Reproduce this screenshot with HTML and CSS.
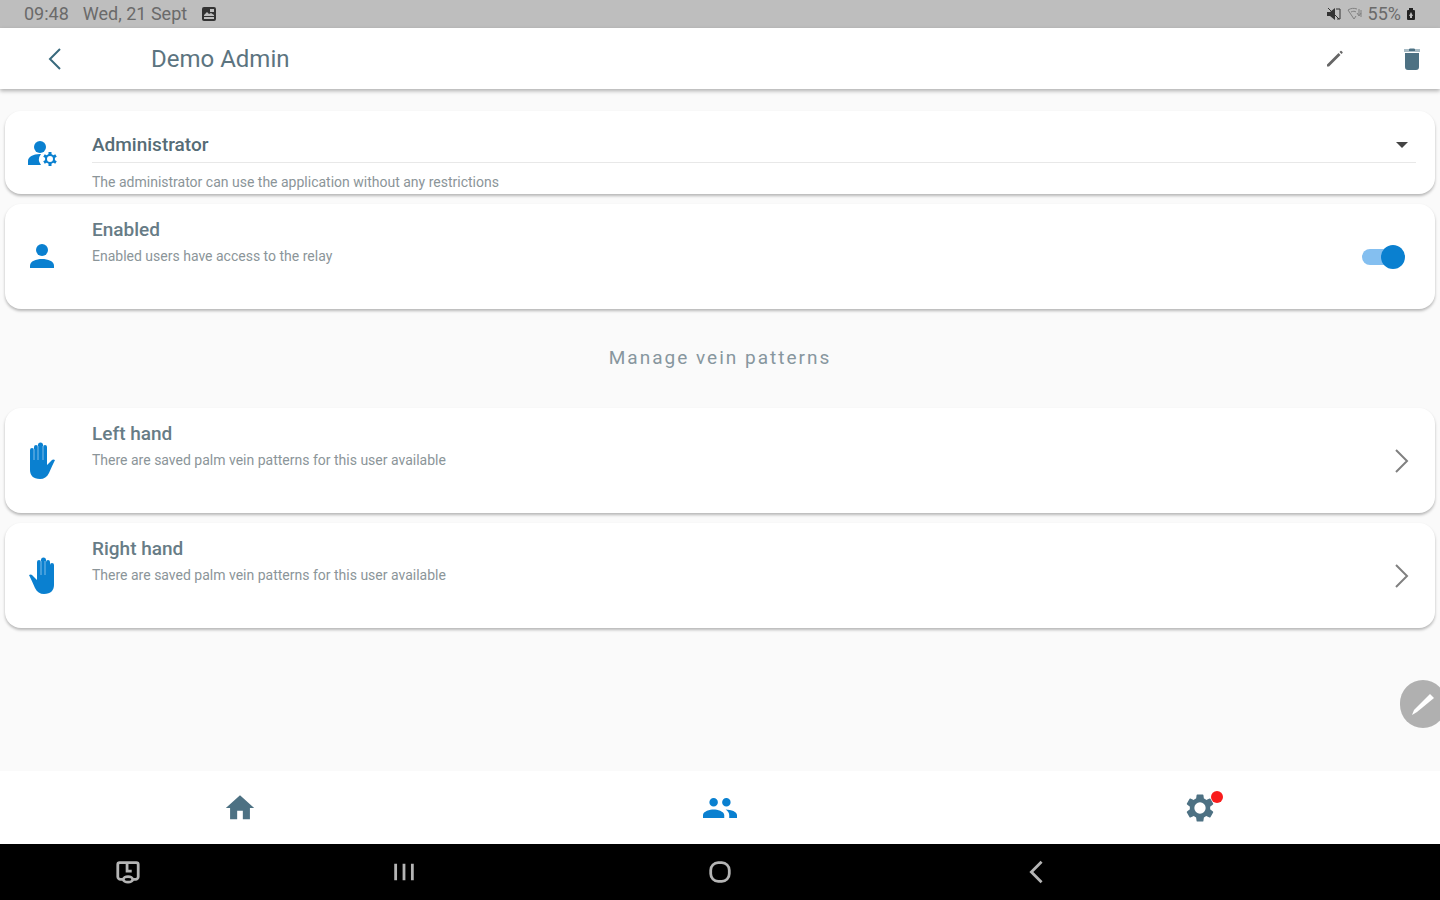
FILE: index.html
```html
<!DOCTYPE html>
<html lang="en">
<head>
<meta charset="utf-8">
<meta name="viewport" content="width=device-width, initial-scale=1">
<title>Demo Admin</title>
<link rel="stylesheet" href="styles.css">
</head>
<body>
<div class="statusbar">
  <div class="status-group">
    <span>09:48</span>
    <span>Wed, 21 Sept</span>
    <svg class="status-icon" viewBox="0 0 16 16" aria-hidden="true"><path fill-rule="evenodd" d="M3 1h10a2 2 0 0 1 2 2v10a2 2 0 0 1-2 2H3a2 2 0 0 1-2-2V3a2 2 0 0 1 2-2zm0 10v2h10v-2zM9 3v3h4V3zM3 9l3-3 2 2 2-1 3 2v1H3z"/></svg>
  </div>
  <div class="status-right">
    <svg class="status-icon" viewBox="0 0 16 16" aria-hidden="true"><path d="M1 6h3l5-4v12l-5-4H1z"/><path class="thin" d="M2 2l11 11M10 3h4v10h-3"/></svg>
    <svg class="status-icon wifi" viewBox="0 0 16 16" aria-hidden="true"><path class="thin" d="M1 4l6 9 2-3M1 4c3-2 6-2 9-1M4 6c2-1 4-1 5 0M12 3v6M10 7l2 3 2-3M14 11V4"/></svg>
    <span>55%</span>
    <svg class="battery" viewBox="0 0 10 16" aria-hidden="true"><path fill-rule="evenodd" d="M3 2h4v2h1a1 1 0 0 1 1 1v8a1 1 0 0 1-1 1H2a1 1 0 0 1-1-1V5a1 1 0 0 1 1-1h1zM5 6L3 10h1v2h2v-2h1z"/></svg>
  </div>
</div>

<header class="appbar">
  <button class="icon-button" type="button" aria-label="Back"><svg class="icon-28 line-teal" viewBox="0 0 28 28"><path d="M20 4L10 14l10 10"/></svg></button>
  <h1 class="title">Demo Admin</h1>
  <button class="icon-button" type="button" aria-label="Edit"><svg class="icon-20 grey" viewBox="0 0 20 20"><path d="M2 15.500L13.500 4l2 2L4 17.500H2zM14.500 3l1-1q.5-.5 1 0l1 1q.5.500 0 1l-1 1z"/></svg></button>
  <button class="icon-button delete" type="button" aria-label="Delete"><svg class="icon-28 teal" viewBox="0 0 28 28"><path class="lid" d="M6 4h5l1-1h4l1 1h5v3H6z"/><path d="M11 4h6v2h-6zM7 8h14v14a3 3 0 0 1-3 3h-8a3 3 0 0 1-3-3z"/></svg></button>
</header>

<main class="content">
  <section class="card role-card">
    <svg class="card-icon" viewBox="0 0 36 36" aria-hidden="true"><circle cx="16" cy="12" r="6"/><path d="M4 30v-4c0-4 5-7 12-7h1a9 9 0 0 0 0 11z"/><path class="cog" d="M26 17v14M20 20.500l12 7M20 27.500l12-7"/><circle class="cog-ring" cx="26" cy="24" r="4"/></svg>
    <div class="field">
      <div class="select-wrap">
        <select class="select" aria-label="Role" aria-describedby="role-help"><option>Administrator</option><option>User</option></select>
        <svg class="caret" viewBox="0 0 12 6" aria-hidden="true"><path d="M0 0h12L6 6z"/></svg>
      </div>
      <p class="help" id="role-help">The administrator can use the application without any restrictions</p>
    </div>
  </section>

  <section class="card">
    <svg class="card-icon" viewBox="0 0 36 36" aria-hidden="true"><circle cx="18" cy="11" r="6"/><path d="M6 29v-2c0-5 6-7 12-7s12 2 12 7v2z"/></svg>
    <div class="text">
      <label class="label" for="enabled">Enabled</label>
      <p class="help">Enabled users have access to the relay</p>
    </div>
    <input class="switch" type="checkbox" role="switch" id="enabled" checked>
  </section>

  <h2 class="section-title">Manage vein patterns</h2>

  <button class="card" type="button">
    <svg class="card-icon hand" viewBox="0 0 36 44" aria-hidden="true"><path d="M6 11a2 2 0 0 1 4 0V8a2 2 0 0 1 4 0V6a2 2 0 0 1 5 0v2a2 2 0 0 1 4 0v18l5-5q1-1 3 0-3 6-6 13c-2 4-5 6-9 6-7 0-10-4-10-9z"/><path class="finger" d="M10 10v11M14 7v14M19 7v14"/></svg>
    <span class="text">
      <span class="label">Left hand</span>
      <span class="help">There are saved palm vein patterns for this user available</span>
    </span>
    <svg class="chevron" viewBox="0 0 28 28" aria-hidden="true"><path d="M9 3l11 11L9 25"/></svg>
  </button>

  <button class="card" type="button">
    <svg class="card-icon hand" viewBox="0 0 36 44" aria-hidden="true"><g transform="matrix(-1 0 0 1 36 0)"><path d="M6 11a2 2 0 0 1 4 0V8a2 2 0 0 1 4 0V6a2 2 0 0 1 5 0v2a2 2 0 0 1 4 0v18l5-5q1-1 3 0-3 6-6 13c-2 4-5 6-9 6-7 0-10-4-10-9z"/><path class="finger" d="M15 7v14M19 7v14"/></g></svg>
    <span class="text">
      <span class="label">Right hand</span>
      <span class="help">There are saved palm vein patterns for this user available</span>
    </span>
    <svg class="chevron" viewBox="0 0 28 28" aria-hidden="true"><path d="M9 3l11 11L9 25"/></svg>
  </button>

  <button class="floating" type="button" aria-label="Pen tools"><svg class="icon-28" viewBox="0 0 28 28"><path d="M3 25l2-5L21 4l4 4L8 22z"/></svg></button>
</main>

<nav class="tabs" aria-label="Main">
  <a class="tab" href="#home" aria-label="Home"><svg class="tab-icon" viewBox="0 0 24 24"><path d="M10 20v-6h4v6h5v-8h3L12 3 2 12h3v8z"/></svg></a>
  <a class="tab active" href="#users" aria-label="Users" aria-current="page"><svg class="tab-icon" viewBox="0 0 24 24"><path d="M16.500 11a3 3 0 1 0-.01-6 3 3 0 0 0 .01 6zm-9 0a3 3 0 1 0-.01-6 3 3 0 0 0 .01 6zm0 2C5 13 0 14.200 0 17v2h15v-2c0-2.800-5-4-7.500-4zm8.500 0c1.500 1 2.500 2.300 2.500 4v2H24v-2c0-2.500-4-3.800-8-4z"/></svg></a>
  <a class="tab" href="#settings" aria-label="Settings"><span class="badge-wrap"><svg class="tab-icon" viewBox="0 0 24 24"><path fill-rule="evenodd" d="M19.140 12.940c.04-.3.060-.61.060-.94 0-.32-.02-.64-.07-.94l2.030-1.580a.49.49 0 0 0 .12-.61l-1.920-3.320a.488.488 0 0 0-.59-.22l-2.390.96c-.5-.38-1.030-.7-1.620-.94l-.36-2.540a.484.484 0 0 0-.48-.41h-3.840c-.24 0-.43.17-.47.41l-.36 2.540c-.59.24-1.130.57-1.620.94l-2.390-.96a.488.488 0 0 0-.59.22L2.740 8.870a.49.49 0 0 0 .12.610l2.030 1.580c-.05.3-.09.63-.09.940s.02.64.07.940l-2.030 1.580a.49.49 0 0 0-.12.610l1.920 3.320c.12.220.37.290.59.220l2.390-.96c.5.380 1.030.7 1.620.940l.36 2.540c.05.240.24.410.48.410h3.840c.24 0 .44-.17.47-.41l.36-2.540c.59-.24 1.130-.56 1.620-.94l2.390.96c.22.080.47 0 .59-.22l1.920-3.320a.49.49 0 0 0-.12-.61zM12 16a4 4 0 1 1 0-8 4 4 0 0 1 0 8z"/></svg><span class="badge"></span></span></a>
</nav>

<nav class="sysnav" aria-label="System">
  <button class="sys-button" type="button" aria-label="Screen capture"><svg class="icon-28" viewBox="0 0 28 28"><path d="M9 22H6a3 3 0 0 1-3-3V6a2 2 0 0 1 2-2h18a2 2 0 0 1 2 2v13a3 3 0 0 1-3 3h-3M13 5v8h5"/><ellipse cx="14" cy="22" rx="5" ry="3"/></svg></button>
  <button class="sys-button" type="button" aria-label="Recent apps"><svg class="icon-28" viewBox="0 0 28 28"><path d="M5 5v18M14 5v18M23 5v18"/></svg></button>
  <button class="sys-button" type="button" aria-label="Home screen"><svg class="icon-28" viewBox="0 0 28 28"><rect x="4" y="4" width="20" height="20" rx="8"/></svg></button>
  <button class="sys-button" type="button" aria-label="System back"><svg class="icon-28" viewBox="0 0 28 28"><path d="M20 3L9 14l11 11"/></svg></button>
</nav>
</body>
</html>
```
FILE: styles.css
```css
* { box-sizing: border-box; }

body {
  margin: 0;
  min-height: 100vh;
  display: flex;
  flex-direction: column;
  background: #fafafa;
  color: #5c7480;
  font-family: Roboto, "Liberation Sans", sans-serif;
}

h1, h2, p { margin: 0; font-weight: 400; }

button {
  border: 0;
  padding: 0;
  background: none;
  color: inherit;
  font: inherit;
  text-align: left;
  cursor: pointer;
}

svg { display: block; flex: none; fill: currentColor; }

.statusbar {
  height: 28px;
  padding: 0 24px;
  display: flex;
  align-items: center;
  justify-content: space-between;
  background: #bebebe;
  color: #6a6a6a;
  font-size: 18px;
  line-height: 28px;
}
.status-group { display: flex; align-items: center; gap: 14px; }
.status-right { display: flex; align-items: center; gap: 5px; }
.status-icon { width: 16px; height: 16px; color: #333; }
.wifi { color: #808080; }
.battery { width: 10px; height: 16px; color: #222; }
.thin { fill: none; stroke: currentColor; stroke-width: 1; }

.appbar {
  height: 61px;
  padding: 0 14px 0 40px;
  display: flex;
  align-items: center;
  background: #fff;
  box-shadow: 0 2px 4px rgba(0, 0, 0, .3);
  position: relative;
}
.title { flex: 1; padding-left: 83px; font-size: 24px; line-height: 32px; }
.icon-28 { width: 28px; height: 28px; }
.icon-20 { width: 20px; height: 20px; }
.line-teal { fill: none; stroke: #39697d; stroke-width: 2; }
.teal { color: #4d7183; }
.lid { fill: #a9bcc5; }
.grey { color: #666; }
.delete { margin-left: 53px; }

.content {
  flex: 1;
  padding: 22px 5px;
  display: flex;
  flex-direction: column;
  position: relative;
}

.card {
  width: 100%;
  min-height: 105px;
  margin-bottom: 10px;
  padding: 16px 19px;
  display: flex;
  align-items: center;
  background: #fff;
  border-radius: 16px;
  box-shadow: 0 2px 3px rgba(0, 0, 0, .27);
}
.role-card { min-height: 83px; padding: 0 19px; }
.card-icon { width: 36px; height: 36px; color: #0a80d0; }
.hand { height: 44px; }
.finger { fill: none; stroke: #7fbde8; stroke-width: 1; }
.cog { stroke: currentColor; stroke-width: 3; }
.cog-ring { fill: #fff; stroke: currentColor; stroke-width: 2; }

.field { flex: 1; margin-left: 32px; padding-top: 16px; }
.select-wrap {
  display: grid;
  align-items: center;
  border-bottom: 1px solid #e8e8e8;
}
.select, .caret { grid-area: 1 / 1; }
.select {
  width: 100%;
  height: 34px;
  padding: 0;
  border: 0;
  background: none;
  appearance: none;
  color: #566c76;
  font: 500 19px/24px Roboto, "Liberation Sans", sans-serif;
}
.caret {
  width: 12px;
  height: 6px;
  margin-right: 8px;
  justify-self: end;
  pointer-events: none;
  color: #444;
}

.text { flex: 1; align-self: flex-start; margin-left: 32px; }
.label {
  display: block;
  color: #677c86;
  font-size: 19px;
  font-weight: 500;
  line-height: 24px;
  margin-top: -2px;
}
.help { display: block; margin-top: 2px; color: #8b9599; font-size: 14px; line-height: 24px; }
.field .help { margin-top: 7px; }

.switch {
  appearance: none;
  position: relative;
  width: 44px;
  height: 26px;
  margin: 0 11px 0 0;
  cursor: pointer;
}
.switch::before, .switch::after { content: ""; position: absolute; }
.switch::before {
  inset: 5px 4px 5px 1px;
  border-radius: 8px;
  background: #84bff0;
}
.switch::after {
  top: 1px;
  right: 0;
  width: 24px;
  height: 24px;
  border-radius: 50%;
  background: #0a80d0;
}
.switch:not(:checked)::before { background: #bbb; }
.switch:not(:checked)::after { right: 20px; background: #eee; }

.section-title {
  margin: 27px 0 38px;
  text-align: center;
  color: #87969e;
  font-size: 19px;
  line-height: 24px;
  letter-spacing: 2px;
}
.chevron {
  width: 28px;
  height: 28px;
  margin-right: 1px;
  fill: none;
  stroke: #808080;
  stroke-width: 2;
}

.floating {
  position: absolute;
  right: -6px;
  bottom: 43px;
  width: 46px;
  height: 48px;
  display: grid;
  place-items: center;
  border-radius: 24px;
  background: #b0b0b0;
  color: #fff;
}

.tabs {
  height: 73px;
  display: grid;
  grid-template-columns: repeat(3, 1fr);
  background: #fff;
}
.tab { display: grid; place-items: center; color: #4d7183; }
.active { color: #0a80d0; }
.tab-icon { width: 34px; height: 34px; }
.badge-wrap { position: relative; }
.badge {
  position: absolute;
  top: 0;
  right: -6px;
  width: 12px;
  height: 12px;
  border-radius: 50%;
  background: #f91c1c;
}

.sysnav {
  height: 56px;
  display: grid;
  grid-template-columns: 255fr 298fr 334fr 298fr 255fr;
  align-items: center;
  background: #000;
  color: #b5b5b5;
}
.sys-button { display: grid; place-items: center; }
.sys-button svg { width: 26px; height: 26px; fill: none; stroke: currentColor; stroke-width: 3; }
```
